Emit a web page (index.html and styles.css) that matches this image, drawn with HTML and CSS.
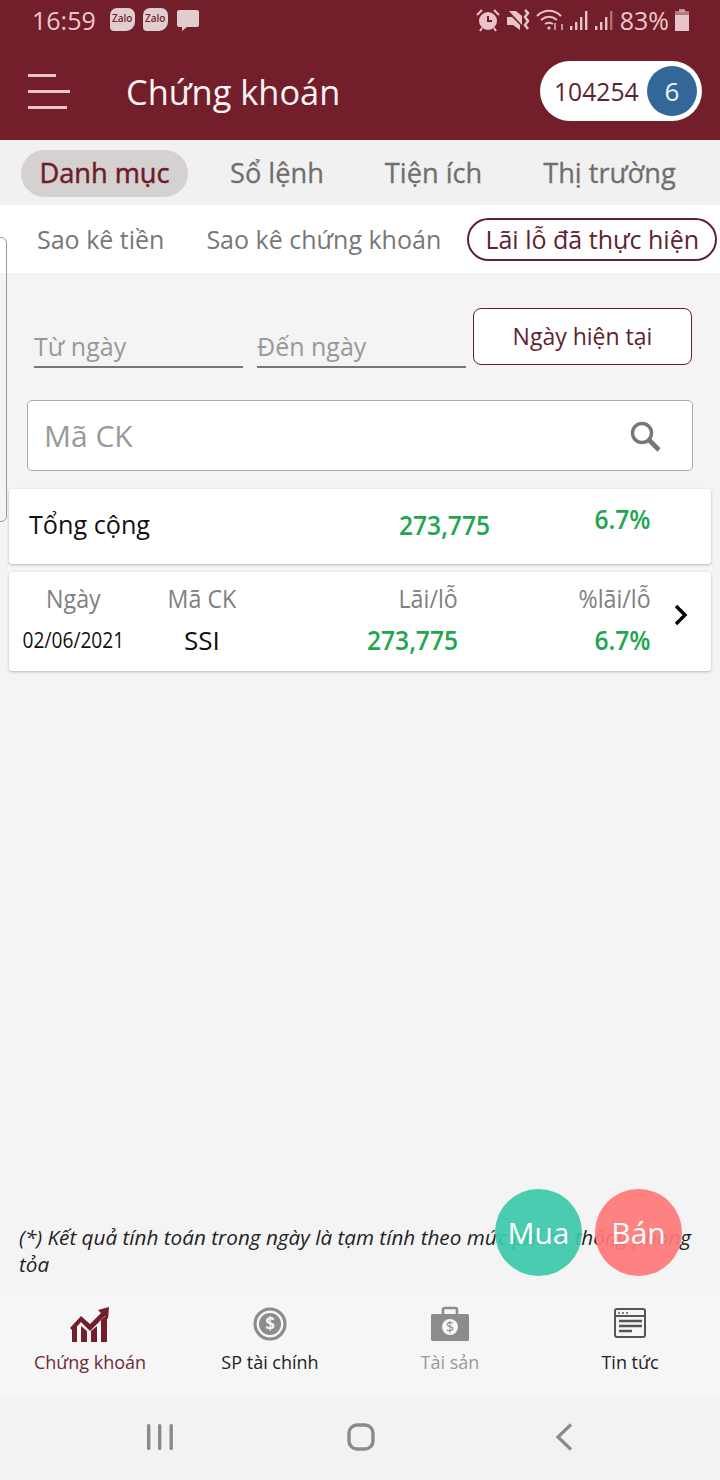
FILE: index.html
```html
<!DOCTYPE html>
<html>
<head>
  <title>Chứng khoán</title>
  <link rel="stylesheet" href="styles.css">
</head>
<body>
  <div id="container">
    <div class="header">
      <div class="status">
        <span class="time">16:59</span>
        <span class="zalo">Zalo</span>
        <span class="zalo">Zalo</span>
        <svg class="msg" width="24" height="24" viewBox="0 0 24 24"><path d="M3 2h18a2 2 0 0 1 2 2v13a2 2 0 0 1-2 2H11l-5 4v-4H3a2 2 0 0 1-2-2V4a2 2 0 0 1 2-2z" fill="#e0cdd0"/></svg>
        <div class="status-right">
          <svg width="24" height="24" viewBox="0 0 24 24" fill="none" stroke="#e8c3c8" stroke-width="2"><circle cx="12" cy="13" r="8" fill="#e8c3c8"/><path d="M12 8v5h4" stroke="#721f2b"/><path d="M1 7l5-5M23 7l-5-5M6 20l-2 3M18 20l2 3"/></svg>
          <svg width="24" height="24" viewBox="0 0 24 24"><path d="M1 9h5l8 8v5L7 17H1z" fill="#e8c3c8"/><path d="M3 3l13 14V8l-6-5z" fill="#e8c3c8"/><path d="M19 2l3 3-3 4 3 4-3 4 3 4" fill="none" stroke="#e8c3c8" stroke-width="2.5"/></svg>
          <svg width="28" height="24" viewBox="0 0 28 24" fill="none" stroke="#e8c3c8" stroke-width="2"><path d="M1 8c7-7 17-7 24 0M5 12c5-4 11-4 16 0M9 16c3-2 5-2 8 0"/><circle cx="13" cy="20" r="1.6" fill="#e8c3c8" stroke="none"/><path d="M19 15v7M26 16v6" stroke-width="1.4"/></svg>
          <svg class="signal" width="20" height="24" viewBox="0 0 20 24" fill="#e8c3c8"><rect x="1" y="18" width="2.4" height="4"/><rect x="6" y="14" width="2.4" height="8"/><rect x="11" y="9" width="2.4" height="13"/><rect x="16" y="3" width="2.4" height="19"/></svg>
          <svg class="signal" width="20" height="24" viewBox="0 0 20 24" fill="#e8c3c8"><rect x="1" y="18" width="2.4" height="4"/><rect x="6" y="14" width="2.4" height="8"/><rect x="11" y="9" width="2.4" height="13"/><rect x="16" y="3" width="2.4" height="19" opacity=".5"/></svg>
          <span class="battery-text">83%</span>
          <svg width="14" height="22" viewBox="0 0 14 22" fill="#e8c3c8"><rect x="4" y="0" width="6" height="3" opacity=".7"/><rect x="0" y="2" width="14" height="5" opacity=".55"/><rect x="0" y="6" width="14" height="16"/></svg>
        </div>
      </div>
      <div class="appbar">
        <div class="burger"><i class="b1"></i><i class="b2"></i><i class="b3"></i></div>
        <div class="title">Chứng khoán</div>
        <div class="account">
          <span class="account-no">104254</span>
          <span class="badge">6</span>
        </div>
      </div>
    </div>

    <div class="tabs">
      <div class="tab tab-active">Danh mục</div>
      <div class="tab tab2">Sổ lệnh</div>
      <div class="tab tab3">Tiện ích</div>
      <div class="tab tab4">Thị trường</div>
    </div>

    <div class="subtabs">
      <div class="subtab">Sao kê tiền</div>
      <div class="subtab sub2">Sao kê chứng khoán</div>
      <div class="subtab sub-active">Lãi lỗ đã thực hiện</div>
    </div>

    <div class="content">
      <div class="drawer-edge"></div>
      <div class="filter">
        <div class="date-input">Từ ngày</div>
        <div class="date-input">Đến ngày</div>
        <div class="today-btn">Ngày hiện tại</div>
      </div>
      <div class="search">
        <span>Mã CK</span>
        <svg width="34" height="34" viewBox="0 0 34 34" fill="none" stroke="#777" stroke-width="3.4"><circle cx="14" cy="14" r="9.5"/><path d="M21 21l10 10" stroke-width="4.6"/></svg>
      </div>
      <div class="card total">
        <div class="total-label">Tổng cộng</div>
        <div class="num total-val">273,775</div>
        <div class="num total-pct">6.7%</div>
      </div>
      <div class="card row">
        <div class="col col-date"><div class="lbl">Ngày</div><div class="date">02/06/2021</div></div>
        <div class="col col-code"><div class="lbl">Mã CK</div><div class="code">SSI</div></div>
        <div class="col col-val"><div class="lbl">Lãi/lỗ</div><div class="num">273,775</div></div>
        <div class="col col-pct"><div class="lbl">%lãi/lỗ</div><div class="num">6.7%</div></div>
        <svg class="chevron" width="14" height="22" viewBox="0 0 14 22" fill="none" stroke="#000" stroke-width="3.4"><path d="M2 2l9 9-9 9"/></svg>
      </div>
      <div class="spacer"></div>
      <div class="note">(*) Kết quả tính toán trong ngày là tạm tính theo mức phí hệ thống phong tỏa</div>
      <div class="fab fab-buy">Mua</div>
      <div class="fab fab-sell">Bán</div>
    </div>

    <div class="bottom-nav">
      <div class="nav-item nav-active">
        <svg width="42" height="36" viewBox="0 0 42 36" fill="#721f2b"><path d="M3 36V24l5-4v16zM12 36V20l6 5v11zM22 36V25l6-5v16zM32 36V14l6-5v27z"/><path d="M1 22L12 10l9 8L32 7l-3-3 11-3-1 12-3-3-15 15-9-9-8 9z"/></svg>
        <span>Chứng khoán</span>
      </div>
      <div class="nav-item nav-fin">
        <svg width="36" height="36" viewBox="0 0 36 36"><circle cx="18" cy="18" r="15" fill="none" stroke="#8c8c8c" stroke-width="3.2"/><circle cx="18" cy="18" r="11" fill="#8c8c8c"/><text x="18" y="24" text-anchor="middle" class="coin">$</text></svg>
        <span>SP tài chính</span>
      </div>
      <div class="nav-item nav-asset">
        <svg width="40" height="36" viewBox="0 0 40 36"><path d="M13 8V4a2 2 0 0 1 2-2h10a2 2 0 0 1 2 2v4" fill="none" stroke="#8c8c8c" stroke-width="2.6"/><rect x="1" y="8" width="38" height="27" rx="1.5" fill="#8c8c8c"/><circle cx="20" cy="21" r="8" fill="#f6f6f6"/><text x="20" y="26" text-anchor="middle" class="bag">$</text></svg>
        <span>Tài sản</span>
      </div>
      <div class="nav-item nav-news">
        <svg width="34" height="36" viewBox="0 0 34 36" fill="none" stroke="#555" stroke-width="2"><rect x="2" y="3" width="30" height="28" rx="2"/><path d="M2 10h30"/><path d="M5 7h2M9 7h2M13 7h2" stroke-width="1.6"/><path d="M6 15h23M6 20h23M6 25h13" stroke-width="2.4"/></svg>
        <span>Tin tức</span>
      </div>
    </div>

    <div class="sys-nav">
      <svg width="28" height="28" viewBox="0 0 28 28" fill="#8a8a8a"><rect x="1" y="1" width="3.4" height="26" rx="1.5"/><rect x="12" y="1" width="3.4" height="26" rx="1.5"/><rect x="23.5" y="1" width="3.4" height="26" rx="1.5"/></svg>
      <svg class="sys-home" width="28" height="28" viewBox="0 0 28 28" fill="none" stroke="#8a8a8a" stroke-width="3.4"><rect x="2" y="2" width="24" height="24" rx="8"/></svg>
      <svg class="sys-back" width="18" height="28" viewBox="0 0 18 28" fill="none" stroke="#8a8a8a" stroke-width="3.2"><path d="M16 1.5L3 14l13 12.5"/></svg>
    </div>
  </div>
</body>
</html>
```

FILE: styles.css
```css
* { box-sizing: border-box; }
body { margin: 0; font-family: "Open Sans", sans-serif; background-color: #f4f4f4; }
#container { width: 720px; height: 1480px; display: flex; flex-direction: column; overflow: hidden; }

.header { height: 140px; background-color: #721f2b; color: #fff; flex: none; }
.status { height: 42px; display: flex; align-items: center; padding: 0 31px 2px 32px; }
.time { font-size: 25px; color: #eec6cb; margin-right: 14px; }
.zalo { width: 25px; height: 23px; border-radius: 7px 7px 9px 4px; background-color: #e0cdd0; color: #721f2b; font-size: 10px; font-weight: 600; text-align: center; line-height: 21px; margin: -2px 8px 0 0; }
.status-right { margin-left: auto; display: flex; align-items: center; gap: 6px; }
.battery-text { font-size: 25px; color: #eec6cb; }
.signal { margin-left: -1px; }

.appbar { height: 98px; display: flex; align-items: center; padding: 0 18px 0 28px; }
.burger { width: 42px; display: flex; flex-direction: column; gap: 13px; }
.burger i { display: block; height: 3px; background-color: #ecc3c8; }
.b1 { width: 28px; }
.b2 { width: 42px; }
.b3 { width: 39px; }
.title { font-size: 34.4px; margin-left: 56px; color: #fdf3f4; }
.account { margin-left: auto; width: 162px; height: 60px; border-radius: 30px; background-color: #fff; display: flex; align-items: center; justify-content: space-between; padding: 0 5px 0 14px; }
.account-no { font-size: 24.7px; color: #5a2530; }
.badge { width: 50px; height: 50px; border-radius: 50%; background-color: #336699; color: #eef4fb; font-size: 26px; text-align: center; line-height: 50px; }

.tabs { height: 65px; background-color: #f1f1f1; display: flex; align-items: center; padding: 0 0 0 21px; flex: none; }
.tab { font-size: 27.2px; color: #6f6f6f; -webkit-text-stroke: 0.3px #6f6f6f; }
.tab-active { width: 167px; height: 47px; margin-top: 2px; border-radius: 24px; background-color: #d6d1d1; color: #6d1c2a; -webkit-text-stroke: 0.5px #6d1c2a; text-align: center; line-height: 45px; }
.tab2 { margin-left: 42px; }
.tab3 { margin-left: 61px; }
.tab4 { margin-left: 61px; }

.subtabs { height: 68px; background-color: #fff; display: flex; align-items: center; padding-left: 37px; flex: none; }
.subtab { font-size: 25px; color: #777; white-space: nowrap; }
.sub2 { margin-left: 42px; }
.sub-active { margin-left: 26px; width: 250px; height: 43px; border: 2px solid #5e2330; border-radius: 22px; color: #5e2330; text-align: center; line-height: 38px; }

.content { flex: 1; position: relative; background-color: #f4f4f4; display: flex; flex-direction: column; padding: 0 9px 0; }
.drawer-edge { position: absolute; left: -10px; top: -36px; width: 17px; height: 285px; border: 1px solid #999; border-radius: 6px; }
.filter { display: flex; align-items: flex-end; padding: 35px 19px 0 25px; }
.date-input { width: 209px; height: 60px; margin-right: 14px; border-bottom: 2px solid #777; font-size: 25px; color: #999; padding-top: 21px; }
.today-btn { width: 219px; height: 57px; margin: 0 0 3px -7px; border: 1px solid #5e2330; border-radius: 8px; background-color: #fff; color: #5e2330; font-size: 23px; text-align: center; line-height: 54px; }
.search { margin: 32px 18px 0 18px; height: 71px; border: 1px solid #aaa; border-radius: 5px; background-color: #fff; display: flex; align-items: center; justify-content: space-between; padding: 0 30px 0 16px; font-size: 30px; color: #999; }
.card { background-color: #fff; border-radius: 3px; box-shadow: 0 1px 3px rgba(0, 0, 0, 0.25); }
.total { margin-top: 18px; height: 75px; position: relative; }
.total-label { position: absolute; left: 20px; top: 18px; font-size: 25.2px; color: #111; }
.num { color: #1fa650; font-size: 27px; font-weight: 600; transform: scaleX(0.91); transform-origin: right; }
.total-val { position: absolute; right: 221px; top: 17px; }
.total-pct { position: absolute; right: 60px; top: 11px; }
.row { margin-top: 8px; height: 99px; display: flex; align-items: flex-start; padding-top: 9px; position: relative; }
.col { display: flex; flex-direction: column; }
.lbl { font-size: 25px; color: #808080; transform: scaleX(0.93); }
.col-date { width: 128px; align-items: center; }
.date { font-size: 22px; color: #111; margin-top: 9px; transform: scaleX(0.87); }
.col-code { width: 130px; align-items: center; }
.code { font-size: 26px; color: #111; font-weight: 500; margin-top: 7px; }
.col-val { width: 191px; align-items: flex-end; }
.col-val .num, .col-pct .num { margin-top: 6px; }
.col-val .lbl, .col-pct .lbl { transform-origin: right; }
.col-pct { width: 193px; align-items: flex-end; }
.chevron { position: absolute; right: 23px; top: 32px; }
.spacer { flex: 1; }
.note { font-size: 20.7px; font-style: italic; color: #222; line-height: 27px; padding: 0 0 0 10px; margin-bottom: 18px; }
.fab { position: absolute; top: 916px; width: 87px; height: 87px; border-radius: 50%; color: #fff; font-size: 30px; text-align: center; line-height: 87px; }
.fab-buy { left: 495px; background-color: rgba(60, 200, 170, 0.93); }
.fab-sell { left: 595px; background-color: rgba(255, 120, 120, 0.93); }

.bottom-nav { height: 100px; background-color: #f6f6f6; display: flex; flex: none; }
.nav-item { width: 180px; display: flex; flex-direction: column; align-items: center; padding-top: 10px; font-size: 18px; gap: 8px; }
.nav-item svg { display: block; }
.nav-active { color: #6d2a38; }
.nav-fin { color: #222; }
.nav-asset { color: #999; }
.nav-news { color: #222; }
.coin { font-family: "Open Sans", sans-serif; font-size: 17px; font-weight: 700; fill: #f6f6f6; }
.bag { font-family: "Open Sans", sans-serif; font-size: 14px; fill: #8c8c8c; }
.sys-nav { height: 84px; background-color: #f2f2f2; display: flex; align-items: center; padding: 0 0 2px 146px; flex: none; }
.sys-home { margin-left: 173px; }
.sys-back { margin-left: 180px; }
```
